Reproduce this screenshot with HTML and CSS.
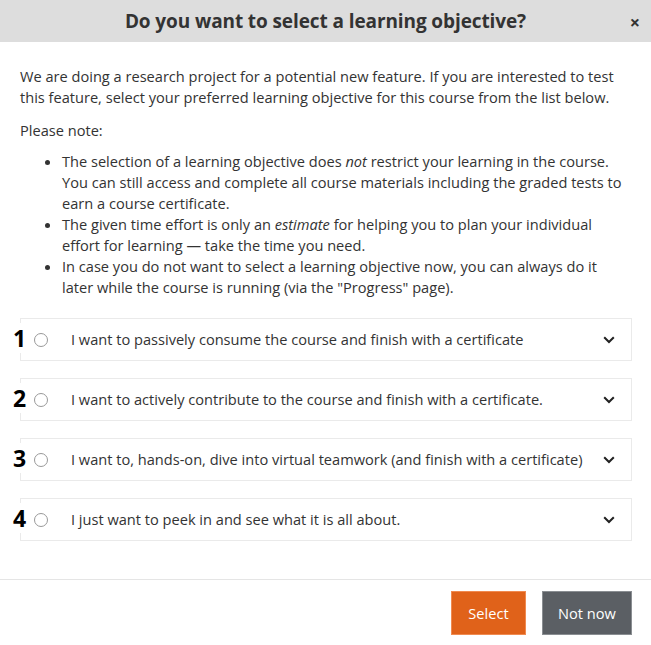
FILE: index.html
```html
<!DOCTYPE html>
<html>
<head>
<meta charset="utf-8">
<link rel="stylesheet" href="styles.css">
</head>
<body>
<div class="modal">
  <div class="header">
    <h1 class="title">Do you want to select a learning objective?</h1>
    <span class="close">×</span>
  </div>
  <div class="body">
    <p class="intro">We are doing a research project for a potential new feature. If you are interested to test this feature, select your preferred learning objective for this course from the list below.</p>
    <p class="note">Please note:</p>
    <ul class="bullets">
      <li>The selection of a learning objective does <em>not</em> restrict your learning in the course. You can still access and complete all course materials including the graded tests to earn a course certificate.</li>
      <li>The given time effort is only an <em>estimate</em> for helping you to plan your individual effort for learning — take the time you need.</li>
      <li>In case you do not want to select a learning objective now, you can always do it<br>later while the course is running (via the "Progress" page).</li>
    </ul>
    <div class="options">
      <div class="option"><span class="num">1</span><span class="radio"></span><span class="label">I want to passively consume the course and finish with a certificate</span><svg class="chev" viewBox="0 0 12 8" width="12" height="8"><path d="M1.2 1.2 L6 6 L10.8 1.2" fill="none" stroke="#222" stroke-width="2"/></svg></div>
      <div class="option"><span class="num">2</span><span class="radio"></span><span class="label">I want to actively contribute to the course and finish with a certificate.</span><svg class="chev" viewBox="0 0 12 8" width="12" height="8"><path d="M1.2 1.2 L6 6 L10.8 1.2" fill="none" stroke="#222" stroke-width="2"/></svg></div>
      <div class="option"><span class="num">3</span><span class="radio"></span><span class="label">I want to, hands-on, dive into virtual teamwork (and finish with a certificate)</span><svg class="chev" viewBox="0 0 12 8" width="12" height="8"><path d="M1.2 1.2 L6 6 L10.8 1.2" fill="none" stroke="#222" stroke-width="2"/></svg></div>
      <div class="option"><span class="num">4</span><span class="radio"></span><span class="label">I just want to peek in and see what it is all about.</span><svg class="chev" viewBox="0 0 12 8" width="12" height="8"><path d="M1.2 1.2 L6 6 L10.8 1.2" fill="none" stroke="#222" stroke-width="2"/></svg></div>
    </div>
  </div>
  <div class="footer">
    <button class="btn btn-select">Select</button>
    <button class="btn btn-notnow">Not now</button>
  </div>
</div>
</body>
</html>
```
FILE: styles.css
```css
* { box-sizing: border-box; }
html, body { margin: 0; padding: 0; background: #fff; }
body { font-family: "Open Sans", "Liberation Sans", sans-serif; color: #333; }
.modal { width: 651px; height: 645px; display: flex; flex-direction: column; }
.header {
  height: 42px; background: #dddddd; display: flex; align-items: center; justify-content: center; position: relative;
}
.title { margin: 0; font-size: 19px; font-weight: 700; color: #333; letter-spacing: -0.1px; }
.close { position: absolute; right: 11px; top: 10px; font-size: 18px; font-weight: 700; color: #333; }
.body { padding: 24px 19px 0 20px; font-size: 14.6px; line-height: 21px; }
.intro { margin: 0 0 12px; }
.note { margin: 0 0 10px; }
.bullets { margin: 0; padding-left: 42px; }
.bullets li { margin: 0; }
.options { display: flex; flex-direction: column; gap: 17px; margin-top: 20px; }
.option {
  position: relative; height: 43px; border: 1px solid #eaeaea; display: flex; align-items: center; padding-left: 13px; padding-right: 14px;
}
.num {
  position: absolute; left: -9px; top: 4px; font-size: 23px; font-weight: 700; color: #000; background: #fff; line-height: 30px; padding: 0 1px;
}
.radio { width: 14px; height: 14px; border: 1px solid #999; border-radius: 50%; flex: none; background: #fff; }
.label { margin-left: 23px; flex: 1; color: #333; }
.chev { flex: none; margin-right: 2px; }
.footer {
  margin-top: auto; border-top: 1px solid #e5e5e5; height: 66px; display: flex; justify-content: flex-end; align-items: center; padding: 0 19px 0 0; gap: 16px;
}
.btn { font-family: "Open Sans", "Liberation Sans", sans-serif; font-size: 14.6px; color: #fff; border: 1px solid transparent; height: 44px; padding: 0 20px; }
.btn-select { background: #e0621a; border-color: #f08a50; width: 75px; padding: 0; }
.btn-notnow { background: #5b5f64; border-color: #8a8e92; width: 90px; padding: 0; }
```
